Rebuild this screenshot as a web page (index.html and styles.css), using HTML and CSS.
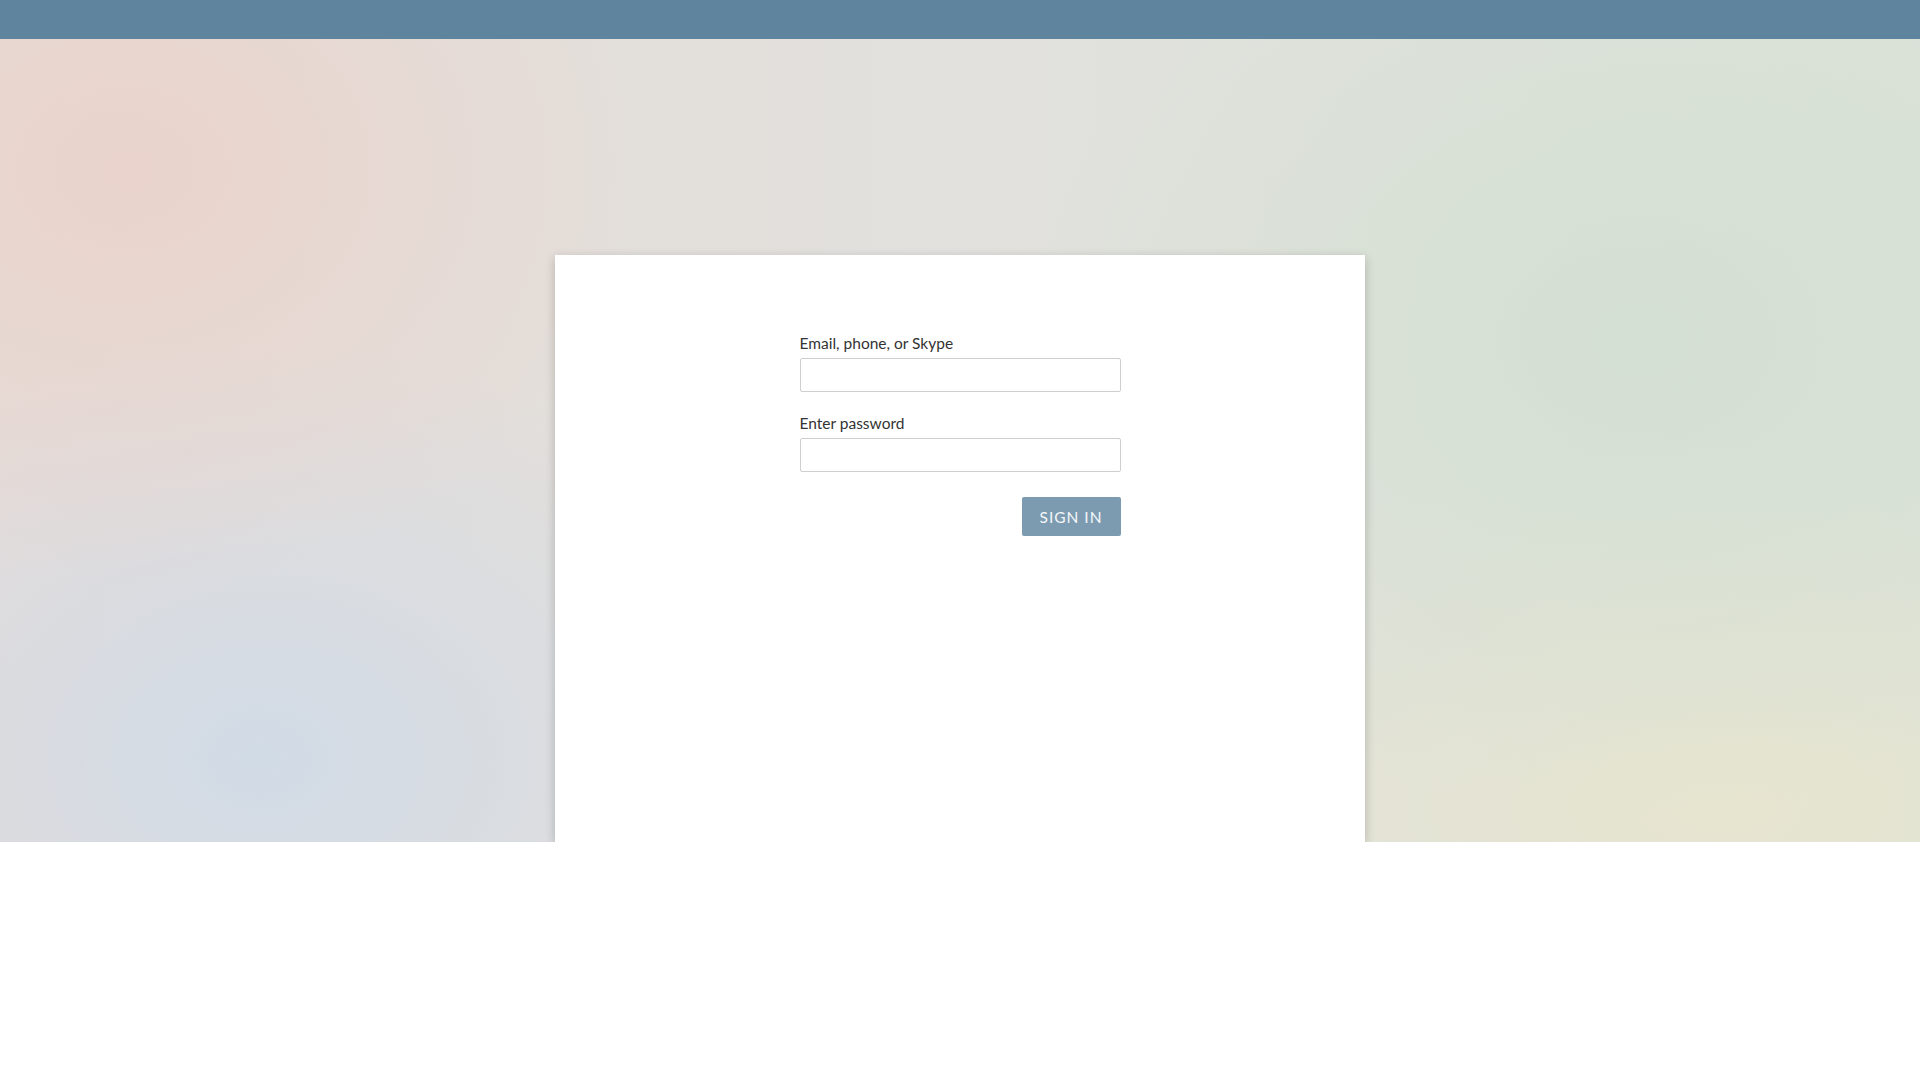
FILE: index.html
```
<!DOCTYPE html>
<html lang="en">
<head>
<meta charset="utf-8">
<title>Sign in</title>
<link rel="stylesheet" href="styles.css">
</head>
<body>
<header class="topbar"></header>
<main class="stage">
  <section class="card">
    <form class="form">
      <label class="label" for="email">Email, phone, or Skype</label>
      <input class="field" id="email" type="text">
      <label class="label second" for="pw">Enter password</label>
      <input class="field" id="pw" type="password">
      <div class="actions">
        <button class="btn" type="button">SIGN IN</button>
      </div>
    </form>
  </section>
</main>
</body>
</html>
```
FILE: styles.css
```
html, body {
  margin: 0;
  padding: 0;
  background: #fff;
  font-family: Lato, "Open Sans", sans-serif;
}
.topbar {
  height: 39px;
  background: #5f849e;
}
.stage {
  height: 803px;
  display: flex;
  justify-content: center;
  align-items: flex-end;
  background:
    radial-gradient(ellipse 520px 420px at 130px 130px, rgba(234,211,203,0.95), rgba(234,211,203,0) 100%),
    radial-gradient(ellipse 560px 420px at 260px 720px, rgba(208,219,231,0.95), rgba(208,219,231,0) 100%),
    radial-gradient(ellipse 620px 480px at 1640px 300px, rgba(211,224,210,0.95), rgba(211,224,210,0) 100%),
    radial-gradient(ellipse 620px 360px at 1720px 760px, rgba(232,229,206,0.95), rgba(232,229,206,0) 100%),
    linear-gradient(90deg, #e5dcd8 0%, #e2e1dd 50%, #dce2da 100%);
}
.card {
  width: 810px;
  height: 587px;
  background: #fff;
  box-shadow: 0 3px 10px rgba(0,0,0,0.2);
  display: flex;
  justify-content: center;
  box-sizing: border-box;
  padding-top: 79px;
}
.form {
  width: 321px;
  display: flex;
  flex-direction: column;
}
.label {
  font-size: 15.5px;
  line-height: 18px;
  color: #333;
  margin-bottom: 6px;
}
.label.second {
  margin-top: 22px;
}
.field {
  height: 34px;
  box-sizing: border-box;
  border: 1px solid #cfcfcf;
  border-radius: 2px;
  margin: 0;
  padding: 0 8px;
  font-family: inherit;
  font-size: 15px;
  background: #fff;
}
.actions {
  display: flex;
  justify-content: flex-end;
  margin-top: 25px;
}
.btn {
  width: 99px;
  height: 39px;
  border: none;
  border-radius: 2px;
  background: #7c9bb0;
  color: #f4f7f9;
  font-family: inherit;
  font-size: 15.5px;
  letter-spacing: 1px;
  padding: 0;
}
```
